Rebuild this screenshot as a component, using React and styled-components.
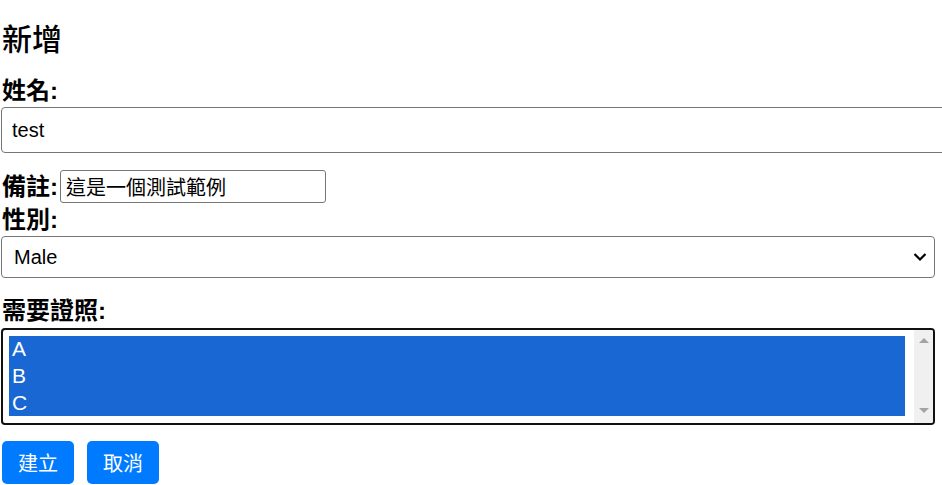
import React from "react";
import styled, { createGlobalStyle } from "styled-components";

const Global = createGlobalStyle`
  html, body {
    margin: 0;
    padding: 0;
    overflow: hidden;
    background: #ffffff;
  }
  body {
    font-family: "Liberation Sans", "Noto Sans CJK TC", sans-serif;
    color: #000;
  }
`;

const Page = styled.div`
  padding: 0 1px;
  width: 942px;
  box-sizing: border-box;
`;

const Title = styled.h2`
  margin: 19px 0 0 1px;
  font-size: 30px;
  line-height: 36px;
  font-weight: 500;
  font-family: "Noto Sans CJK TC", sans-serif;
`;

const Label = styled.label`
  display: block;
  margin: ${(p) => p.$mt || 0}px 0 0 1px;
  font-size: 24px;
  line-height: 24px;
  font-weight: 700;
  font-family: "Liberation Sans", "Noto Sans CJK TC", sans-serif;
  white-space: nowrap;
`;

const TextInput = styled.input`
  display: block;
  box-sizing: border-box;
  margin-top: 4px;
  width: 960px;
  height: 46px;
  padding: 0 10px;
  border: 1px solid #767676;
  border-radius: 4px;
  font-size: 20px;
  font-family: "Liberation Sans", "Noto Sans CJK TC", sans-serif;
  color: #000;
  outline: none;
`;

const InlineRow = styled.div`
  display: flex;
  align-items: center;
  gap: 2px;
  margin-top: 17px;
  height: 33px;
  & > label {
    margin: 0 0 0 1px;
  }
`;

const SmallInput = styled.input`
  box-sizing: border-box;
  width: 266px;
  height: 33px;
  padding: 0 5px;
  border: 1px solid #767676;
  border-radius: 3px;
  font-size: 20px;
  font-family: "Noto Sans CJK TC", sans-serif;
  color: #000;
  outline: none;
`;

const SelectWrap = styled.div`
  position: relative;
  margin-top: 4px;
  width: 934px;
  height: 42px;
`;

const Select = styled.select`
  appearance: none;
  box-sizing: border-box;
  width: 100%;
  height: 100%;
  padding: 0 12px;
  border: 1px solid #767676;
  border-radius: 4px;
  background: #fff;
  font-size: 20px;
  font-family: "Liberation Sans", sans-serif;
  color: #000;
  outline: none;
`;

const Chevron = styled.svg`
  position: absolute;
  right: 8px;
  top: 16px;
  width: 14px;
  height: 10px;
  pointer-events: none;
`;

const ListBox = styled.div`
  box-sizing: border-box;
  margin-top: 5px;
  width: 934px;
  height: 97px;
  border: 2px solid #111;
  border-radius: 4px;
  display: flex;
  overflow: hidden;
  background: #fff;
`;

const OptionsArea = styled.div`
  flex: 1;
  padding: 6px 9px 7px 6px;
`;

const OptionsBlock = styled.div`
  height: 80px;
  background: #1967d2;
  display: flex;
  flex-direction: column;
`;

const Option = styled.div`
  flex: 1;
  display: flex;
  align-items: center;
  padding-left: 3px;
  color: #fff;
  font-size: 21px;
  font-family: "Liberation Sans", sans-serif;
`;

const ScrollTrack = styled.div`
  width: 19px;
  background: #f0f0f0;
  display: flex;
  flex-direction: column;
  justify-content: space-between;
  align-items: center;
  padding: 8px 0 10px;
`;

const Arrow = styled.div`
  width: 0;
  height: 0;
  border-left: 5px solid transparent;
  border-right: 5px solid transparent;
  ${(p) =>
    p.$down
      ? "border-top: 5px solid #a3a3a3;"
      : "border-bottom: 5px solid #a3a3a3;"}
`;

const ButtonRow = styled.div`
  display: flex;
  gap: 13px;
  margin: 16px 0 0 1px;
`;

const Button = styled.button`
  height: 43px;
  padding: 0 16px;
  border: none;
  border-radius: 5px;
  background: #007bff;
  color: #fff;
  font-size: 20px;
  font-family: "Noto Sans CJK TC", sans-serif;
  cursor: pointer;
`;

export default function App() {
  return (
    <Page>
      <Global />
      <Title>新增</Title>
      <Label $mt={24}>姓名:</Label>
      <TextInput defaultValue="test" />
      <InlineRow>
        <Label>備註:</Label>
        <SmallInput defaultValue="這是一個測試範例" />
      </InlineRow>
      <Label $mt={5}>性別:</Label>
      <SelectWrap>
        <Select defaultValue="Male">
          <option>Male</option>
          <option>Female</option>
        </Select>
        <Chevron viewBox="0 0 14 10">
          <path d="M1.5 2 L7 7.5 L12.5 2" fill="none" stroke="#000" strokeWidth="2.2" />
        </Chevron>
      </SelectWrap>
      <Label $mt={21}>需要證照:</Label>
      <ListBox>
        <OptionsArea>
          <OptionsBlock>
            <Option>A</Option>
            <Option>B</Option>
            <Option>C</Option>
          </OptionsBlock>
        </OptionsArea>
        <ScrollTrack>
          <Arrow />
          <Arrow $down />
        </ScrollTrack>
      </ListBox>
      <ButtonRow>
        <Button>建立</Button>
        <Button>取消</Button>
      </ButtonRow>
    </Page>
  );
}
